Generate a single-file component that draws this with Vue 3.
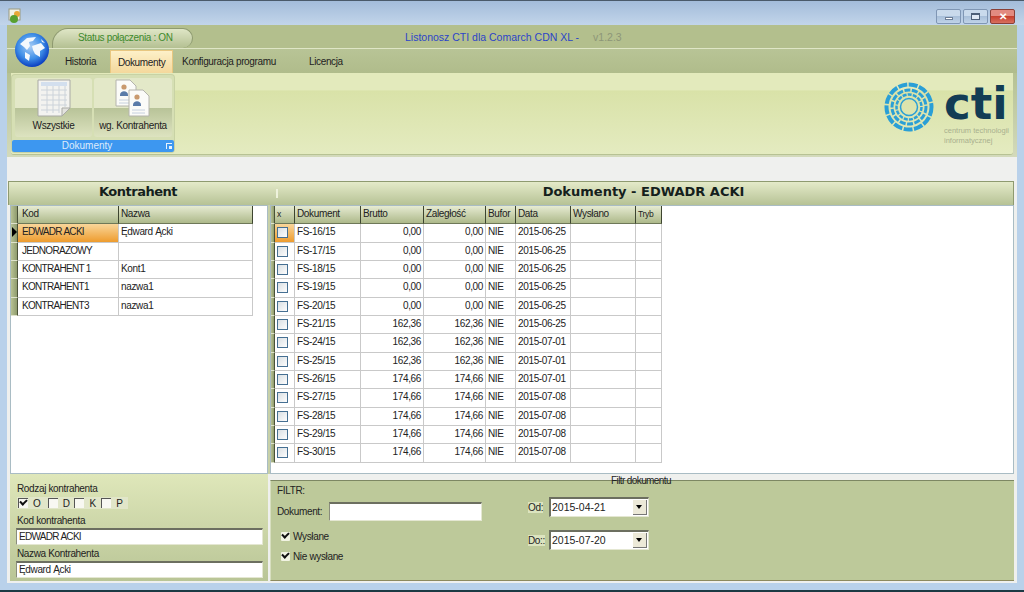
<template>
  <div class="window">
    <div class="titlebar">
      <svg class="app-icon" width="16" height="16" viewBox="0 0 16 16">
        <rect x="1" y="1" width="11" height="11" fill="#f2f2e6" stroke="#9a9a80" />
        <circle cx="9" cy="6" r="3" fill="#e8a838" />
        <circle cx="6" cy="11" r="4" fill="#58a030" />
      </svg>
      <div class="win-buttons">
        <span class="win-btn"><i class="min"></i></span>
        <span class="win-btn"><i class="max"></i></span>
        <span class="win-btn close">✕</span>
      </div>
    </div>

    <div class="client">
      <div class="ribbon">
        <svg class="globe" width="36" height="36" viewBox="0 0 36 36">
          <defs>
            <radialGradient id="gl" cx="45%" cy="40%" r="60%">
              <stop offset="0" stop-color="#a9cdf5" />
              <stop offset="0.6" stop-color="#3f8fe8" />
              <stop offset="1" stop-color="#0b3fc0" />
            </radialGradient>
            <filter id="soft"><feGaussianBlur stdDeviation="0.6" /></filter>
          </defs>
          <circle cx="18" cy="18" r="17" fill="url(#gl)" />
          <g filter="url(#soft)" fill="#f4f8fd">
            <path d="M6 12 L13 6 L22 5 L19 9 L15 10 L16 14 L13 18 L10 15 Z" />
            <path d="M18 14 L27 11 L31 16 L26 19 L26 25 L21 22 L19 18 Z" />
            <path d="M11 20 L16 23 L15 29 L11 26 Z" />
            <path d="M27 7 L31 11 L28 10 Z" />
          </g>
        </svg>

        <div class="top-row">
          <div class="status">Status połączenia : ON</div>
          <div class="app-title">Listonosz CTI dla Comarch CDN XL -</div>
          <div class="version">v1.2.3</div>
        </div>

        <div class="tabs">
          <span class="tab historia">Historia</span>
          <span class="tab active">Dokumenty</span>
          <span class="tab konfig">Konfiguracja programu</span>
          <span class="tab licencja">Licencja</span>
        </div>

        <div class="panel-wrap">
          <div class="panel">
            <div class="group">
              <div class="group-btns">
                <div class="big-btn">
                  <svg width="34" height="38" viewBox="0 0 34 38">
                    <path d="M1 1H33V29L25 37H1Z" fill="#f3f3f0" stroke="#a9aaa5" />
                    <g stroke="#ccd3da" stroke-width="1">
                      <path d="M4 6H30M4 11H30M4 16H30M4 21H30M4 26H30M4 31H22" />
                      <path d="M10 4V34M16 4V34M22 4V34M28 4V28" />
                    </g>
                    <rect x="4" y="3" width="26" height="4" fill="#d3dfee" />
                    <path d="M33 29L25 37V29Z" fill="#e2e2de" stroke="#a9aaa5" />
                  </svg>
                  <span>Wszystkie</span>
                </div>
                <div class="big-btn">
                  <svg width="36" height="38" viewBox="0 0 36 38">
                    <g>
                      <path d="M1 1H15L21 7V27H1Z" fill="#fbfbf8" stroke="#b4b4ad" />
                      <circle cx="9" cy="8" r="2.6" fill="#c99a6e" />
                      <path d="M5 16C5 11 13 11 13 16V17H5Z" fill="#5a7ba8" />
                      <path d="M4 21H17M4 24H17" stroke="#c6d0de" />
                    </g>
                    <g transform="translate(13 10)">
                      <path d="M1 1H15L21 7V27H1Z" fill="#fbfbf8" stroke="#b4b4ad" />
                      <circle cx="9" cy="8" r="2.6" fill="#c99a6e" />
                      <path d="M5 16C5 11 13 11 13 16V17H5Z" fill="#5a7ba8" />
                      <path d="M4 21H17M4 24H17" stroke="#c6d0de" />
                    </g>
                  </svg>
                  <span>wg. Kontrahenta</span>
                </div>
              </div>
              <div class="group-label">
                Dokumenty
                <i class="launcher"></i>
              </div>
            </div>

            <div class="logo">
              <svg width="50" height="50" viewBox="0 0 50 50" fill="none" stroke="#2a9fd6">
                <circle cx="25" cy="25" r="22.5" stroke-width="4" stroke-dasharray="9 1.5" />
                <circle cx="25" cy="25" r="17" stroke-width="3" stroke-dasharray="6 1.5" />
                <circle cx="25" cy="25" r="12.5" stroke-width="2.5" stroke-dasharray="4 1.2" />
                <circle cx="25" cy="25" r="8.5" stroke-width="1.5" />
              </svg>
              <div class="logo-text">
                <div class="cti">cti</div>
                <div class="cti-sub">centrum technologii<br />informatycznej</div>
              </div>
            </div>
          </div>
        </div>
      </div>

      <div class="band"></div>

      <div class="heads">
        <div class="head left-head">Kontrahent</div>
        <i class="head-split"></i>
        <div class="head right-head">Dokumenty - EDWADR ACKI</div>
      </div>

      <div class="grids">
        <div class="grid-box left-box">
          <div class="row hdr left-cols">
            <span class="rh"></span>
            <span class="cell first">Kod</span>
            <span class="cell">Nazwa</span>
          </div>
          <div v-for="(k, i) in contractors" :key="k.code" class="row left-cols">
            <span class="rh" :class="{ current: i === 0 }"></span>
            <span class="cell first code" :class="{ selected: i === 0 }">{{ k.code }}</span>
            <span class="cell">{{ k.name }}</span>
          </div>
        </div>

        <div class="grid-box right-box">
          <div class="row hdr right-cols">
            <span class="rh"></span>
            <span class="cell small">x</span>
            <span class="cell">Dokument</span>
            <span class="cell">Brutto</span>
            <span class="cell">Zaległość</span>
            <span class="cell">Bufor</span>
            <span class="cell">Data</span>
            <span class="cell">Wysłano</span>
            <span class="cell small">Tryb</span>
          </div>
          <div v-for="(d, i) in documents" :key="d.no" class="row right-cols">
            <span class="rh"></span>
            <span class="cell check-cell" :class="{ selected: i === 0 }"><i class="box"></i></span>
            <span class="cell">{{ d.no }}</span>
            <span class="cell num">{{ d.amount }}</span>
            <span class="cell num">{{ d.amount }}</span>
            <span class="cell">NIE</span>
            <span class="cell">{{ d.date }}</span>
            <span class="cell"></span>
            <span class="cell"></span>
          </div>
        </div>
      </div>

      <div class="bottom">
        <div class="contractor-form">
          <div class="lbl">Rodzaj kontrahenta</div>
          <div class="types">
            <label v-for="t in types" :key="t.name" class="type">
              <i class="flat-box" :class="{ on: t.on }"></i>{{ t.name }}
            </label>
          </div>
          <div class="lbl">Kod kontrahenta</div>
          <div class="input wide code">EDWADR ACKI</div>
          <div class="lbl second">Nazwa Kontrahenta</div>
          <div class="input wide">Ędward Ącki</div>
        </div>

        <div class="filter">
          <span class="legend">Filtr dokumentu</span>
          <div class="filter-left">
            <div class="lbl">FILTR:</div>
            <div class="doc-row">
              <span>Dokument:</span>
              <div class="input doc-input"></div>
            </div>
            <div class="tick"><i class="flat-tick"></i>Wysłane</div>
            <div class="tick"><i class="flat-tick"></i>Nie wysłane</div>
          </div>
          <div class="filter-dates">
            <div class="date-row">
              <span class="date-lbl"><span>Od:</span></span>
              <div class="combo">2015-04-21<i class="arrow"></i></div>
            </div>
            <div class="date-row">
              <span class="date-lbl"><span>Do::</span></span>
              <div class="combo">2015-07-20<i class="arrow"></i></div>
            </div>
          </div>
        </div>
      </div>
    </div>
  </div>
</template>

<script setup>
const contractors = [
  { code: 'EDWADR ACKI', name: 'Ędward Ącki' },
  { code: 'JEDNORAZOWY', name: '' },
  { code: 'KONTRAHENT 1', name: 'Kont1' },
  { code: 'KONTRAHENT1', name: 'nazwa1' },
  { code: 'KONTRAHENT3', name: 'nazwa1' },
];

const documents = [
  { no: 'FS-16/15', amount: '0,00', date: '2015-06-25' },
  { no: 'FS-17/15', amount: '0,00', date: '2015-06-25' },
  { no: 'FS-18/15', amount: '0,00', date: '2015-06-25' },
  { no: 'FS-19/15', amount: '0,00', date: '2015-06-25' },
  { no: 'FS-20/15', amount: '0,00', date: '2015-06-25' },
  { no: 'FS-21/15', amount: '162,36', date: '2015-06-25' },
  { no: 'FS-24/15', amount: '162,36', date: '2015-07-01' },
  { no: 'FS-25/15', amount: '162,36', date: '2015-07-01' },
  { no: 'FS-26/15', amount: '174,66', date: '2015-07-01' },
  { no: 'FS-27/15', amount: '174,66', date: '2015-07-08' },
  { no: 'FS-28/15', amount: '174,66', date: '2015-07-08' },
  { no: 'FS-29/15', amount: '174,66', date: '2015-07-08' },
  { no: 'FS-30/15', amount: '174,66', date: '2015-07-08' },
];

const types = [
  { name: 'O', on: true },
  { name: 'D', on: false },
  { name: 'K', on: false },
  { name: 'P', on: false },
];
</script>

<style>
html, body { margin: 0; overflow: hidden; }
</style>

<style scoped>
.window {
  width: 1024px;
  height: 592px;
  display: flex;
  flex-direction: column;
  background: #b9d1ea;
  border-top: 1px solid #4a5a6a;
  border-bottom: 2px solid #1c3a44;
  box-sizing: border-box;
  font-family: "Liberation Sans", sans-serif;
  font-size: 10px;
  letter-spacing: -0.35px;
  color: #222;
  overflow: hidden;
}
.titlebar {
  height: 24px;
  flex: none;
  display: flex;
  justify-content: space-between;
  padding: 7px 9px 0 8px;
  box-sizing: border-box;
  background: linear-gradient(#a3bcda, #c2d5ea);
}
.win-buttons { display: flex; gap: 2px; margin-top: 1px; height: 15px; }
.win-btn {
  width: 25px;
  display: flex;
  align-items: center;
  justify-content: center;
  border: 1px solid #7f96b4;
  border-radius: 2px;
  box-sizing: border-box;
  background: linear-gradient(#c9daec 45%, #a9c0da 50%, #c0d3e8);
}
.win-btn.close {
  background: linear-gradient(#e28a80 45%, #c7402f 50%, #d8705f);
  border-color: #8a4038;
  color: #fff;
  font-size: 10px;
  font-weight: bold;
}
.min { width: 8px; height: 3px; background: #fff; border: 1px solid #6d7f98; box-sizing: border-box; margin-top: 4px; }
.max { width: 9px; height: 7px; border: 1px solid #4c5f78; border-top-width: 2px; box-sizing: border-box; background: #dfe9f5; }

.client {
  flex: 1;
  margin: 0 7px 7px;
  display: flex;
  flex-direction: column;
  min-height: 0;
  background: #eff0ee;
}
.ribbon { position: relative; flex: none; }
.globe { position: absolute; left: 7px; top: 7px; z-index: 2; }
.top-row {
  height: 23px;
  display: flex;
  align-items: center;
  background: #b3bf8d;
  border-bottom: 1px solid #dfe6c6;
}
.status {
  margin-left: 45px;
  margin-top: 3px;
  width: 141px;
  height: 20px;
  box-sizing: border-box;
  padding: 3px 0 0 25px;
  border: 1px solid #8e9a70;
  border-bottom: 0;
  border-radius: 16px 10px 10px 0;
  background: linear-gradient(#dfe6c6, #b4c092);
  color: #3d8a2c;
}
.app-title { margin-left: 212px; color: #2b45c8; font-size: 10.5px; letter-spacing: 0; }
.version { margin-left: 14px; color: #8d9678; font-size: 10.5px; letter-spacing: 0; }

.tabs {
  height: 24px;
  display: flex;
  align-items: center;
  background: linear-gradient(#b8c496, #b0bc8b);
  position: relative;
  padding-top: 1px;
  box-sizing: border-box;
}
.tab { white-space: nowrap; }
.historia { margin-left: 58px; }
.active {
  margin-left: 14px;
  width: 63px;
  height: 23px;
  line-height: 23px;
  text-align: center;
  box-sizing: border-box;
  background: linear-gradient(#fdf0c8, #f4d89c);
  border: 1px solid #e8c780;
  border-bottom: 0;
}
.konfig { margin-left: 9px; }
.licencja { margin-left: 33px; }

.panel-wrap {
  padding: 0 4px 2px;
  background: linear-gradient(#b5c193, #d3dabb);
}
.panel {
  height: 82px;
  display: flex;
  justify-content: space-between;
  box-sizing: border-box;
  padding: 2px 1px 2px 1px;
  background: linear-gradient(#e3eabc 0, #e3eabc 21%, #d9e2a8 22%, #e4ebc0 100%);
  border-bottom: 1px solid #b7c294;
  border-radius: 0 0 3px 3px;
}
.group {
  width: 162px;
  display: flex;
  flex-direction: column;
  background: #d6dfb4;
  border-radius: 3px;
  box-shadow: 0 0 0 1px #c8d2a4;
}
.group-btns {
  display: flex;
  gap: 2px;
  padding: 3px 2px 0 3px;
  height: 62px;
  box-sizing: border-box;
}
.big-btn {
  flex: 1;
  height: 59px;
  display: flex;
  flex-direction: column;
  align-items: center;
  background: linear-gradient(#e3e8c8 0, #e3e8c8 50%, #b8c398 51%, #dde3c0 100%);
  border-radius: 3px;
}
.big-btn svg { flex: none; margin-top: 1px; }
.big-btn span { margin-top: 3px; white-space: nowrap; }
.big-btn:first-child { flex: none; width: 77px; }
.group-label {
  margin: 3px 0 0;
  height: 12px;
  line-height: 12px;
  position: relative;
  text-align: center;
  color: #dcebfb;
  background: #3d97f0;
  border-radius: 2px;
  padding-right: 12px;
  letter-spacing: 0;
}
.launcher {
  position: absolute;
  right: 2px;
  top: 3px;
  width: 6px;
  height: 6px;
  border-top: 1px solid #e8f2fc;
  border-left: 1px solid #e8f2fc;
  box-sizing: border-box;
}
.launcher::after {
  content: "";
  position: absolute;
  right: 0;
  bottom: 0;
  width: 3px;
  height: 3px;
  background: #e8f2fc;
}
.logo { display: flex; gap: 10px; margin: 6px 4px 0 0; }
.logo svg { margin-top: 1px; }
.logo-text { width: 64px; }
.cti {
  font-family: "DejaVu Sans", sans-serif;
  font-size: 45px;
  font-weight: bold;
  line-height: 46px;
  height: 46px;
  color: #123c54;
  letter-spacing: 0;
}
.cti-sub { font-size: 7.5px; line-height: 10px; color: #a9b08f; white-space: nowrap; margin-top: -1px; letter-spacing: 0; }

.band { height: 24px; flex: none; }

.heads {
  height: 24px;
  flex: none;
  display: flex;
  align-items: center;
  margin: 0 3px 0 1px;
  padding-bottom: 4px;
  background: linear-gradient(#e4eac9, #b6c295);
  border: 1px solid #8e9a70;
  border-bottom: 0;
  box-sizing: border-box;
  font-family: "DejaVu Sans", sans-serif;
  font-weight: bold;
  font-size: 13px;
  letter-spacing: 0;
  color: #14201c;
}
.head { text-align: center; }
.left-head { width: 258px; letter-spacing: -0.5px; }
.head-split { width: 2px; height: 9px; margin: 3px 0 0 9px; background: #eef2dc; }
.right-head { flex: 1; padding-right: 4px; }

.grids {
  flex: none;
  height: 269px;
  display: flex;
  gap: 2px;
  margin: 0 3px;
  background: #c7d0a8;
}
.grid-box {
  box-sizing: border-box;
  background: #fff;
  border: 1px solid #a9bcc4;
}
.left-box { width: 258px; }
.right-box { flex: 1; }
.row { display: grid; height: 18.33px; }
.left-cols { grid-template-columns: 7px 101px 134px; width: 242px; }
.right-cols { grid-template-columns: 4px 20px 66px 63px 62px 30px 55px 65px 26px; width: 391px; }
.cell {
  box-sizing: border-box;
  padding: 0 2px;
  line-height: 16px;
  border-right: 1px solid #c9c9c9;
  border-bottom: 1px solid #c9c9c9;
  white-space: nowrap;
  overflow: hidden;
}
.code { letter-spacing: -0.7px; }
.left-cols .first { padding-left: 4px; }
.num { text-align: right; }
.rh { background: linear-gradient(90deg, #b7c294, #8f9b6e); border-right: 1px solid #4a5238; border-bottom: 1px solid #dfe3cc; position: relative; }
.rh.current::after {
  content: "";
  position: absolute;
  left: 1px;
  top: 3px;
  border-left: 5px solid #000;
  border-top: 5px solid transparent;
  border-bottom: 5px solid transparent;
}
.hdr { background: linear-gradient(#e6ebd2, #aab686); }
.hdr .cell { border-right: 1px solid #3d4530; border-bottom: 1px solid #6e7858; }
.hdr .small { font-size: 8.5px; }
.selected { background: linear-gradient(#f9d69a, #ee9c2e); }
.check-cell { display: flex; align-items: center; }
.box {
  width: 11px;
  height: 11px;
  box-sizing: border-box;
  border: 1px solid #456f92;
  background: linear-gradient(135deg, #d9dfe3, #fdfdfd);
}

.bottom { flex: 1; display: flex; gap: 2px; margin: 0 3px; min-height: 0; }
.contractor-form {
  width: 258px;
  height: 107px;
  box-sizing: border-box;
  padding: 8px 5px 0 6px;
  background: linear-gradient(#dfe7ba, #b9c596);
}
.lbl { line-height: 13px; padding-left: 1px; }
.second { margin-top: 2px; }
.types {
  display: flex;
  width: 111px;
  height: 12px;
  margin: 2px 0 5px 1px;
  padding-left: 1px;
  box-sizing: border-box;
  background: #e1e6c9;
}
.type { display: flex; align-items: center; width: 27px; gap: 5px; }
.type:first-child { width: 30px; }
.flat-box {
  width: 10px;
  height: 10px;
  box-sizing: border-box;
  border-top: 1px solid #555;
  border-left: 1px solid #555;
  background: #f8f8f2;
  position: relative;
}
.flat-box.on::after, .flat-tick::after {
  content: "";
  position: absolute;
  left: 1px;
  top: 0;
  width: 5px;
  height: 3px;
  border-left: 2px solid #111;
  border-bottom: 2px solid #111;
  transform: rotate(-45deg);
}
.input {
  box-sizing: border-box;
  background: #fff;
  border-top: 2px solid #6c6f60;
  border-left: 1px solid #8a8d7c;
  border-bottom: 1px solid #e4e7d2;
  border-right: 1px solid #e4e7d2;
  line-height: 14px;
  padding-left: 2px;
}
.wide { width: 247px; height: 17px; margin-top: 1px; }

.filter {
  flex: 1;
  position: relative;
  display: flex;
  margin-top: 6px;
  box-sizing: border-box;
  background: #bdc99a;
  border-top: 1px solid #7d8763;
  border-left: 1px solid #d8dfc0;
  border-bottom: 1px solid #8d8a5e;
  margin-bottom: 2px;
  padding: 3px 0 0 6px;
}
.filter .lbl { padding-left: 0; }
.legend { position: absolute; left: 340px; top: -6px; color: #222; letter-spacing: -0.6px; }
.filter-left { width: 251px; }
.doc-row { display: flex; align-items: center; gap: 7px; margin-top: 5px; }
.doc-input { width: 153px; height: 19px; }
.tick { display: flex; align-items: center; gap: 3px; margin: 9px 0 0 4px; height: 12px; }
.tick + .tick { margin-top: 8px; }
.flat-tick {
  width: 9px;
  height: 9px;
  position: relative;
  background: #f1f3e2;
  border-radius: 1px;
}
.filter-dates { padding-top: 13px; }
.date-row { display: flex; align-items: center; height: 20px; margin-bottom: 13px; }
.date-lbl { width: 21px; }
.date-lbl span { background: #dce4bf; }
.combo {
  width: 100px;
  height: 20px;
  position: relative;
  box-sizing: border-box;
  background: #fff;
  border-top: 2px solid #6c6f60;
  border-left: 2px solid #6c6f60;
  border-bottom: 1px solid #e4e7d2;
  border-right: 1px solid #e4e7d2;
  line-height: 16px;
  padding-left: 1px;
  font-size: 10.5px;
  letter-spacing: 0;
}
.arrow {
  position: absolute;
  right: 1px;
  top: 1px;
  width: 14px;
  height: 15px;
  background: #ece9d8;
  border-right: 1px solid #777;
  border-bottom: 1px solid #777;
  box-sizing: border-box;
}
.arrow::after {
  content: "";
  position: absolute;
  left: 3px;
  top: 5px;
  border-top: 4px solid #000;
  border-left: 3.5px solid transparent;
  border-right: 3.5px solid transparent;
}
</style>
